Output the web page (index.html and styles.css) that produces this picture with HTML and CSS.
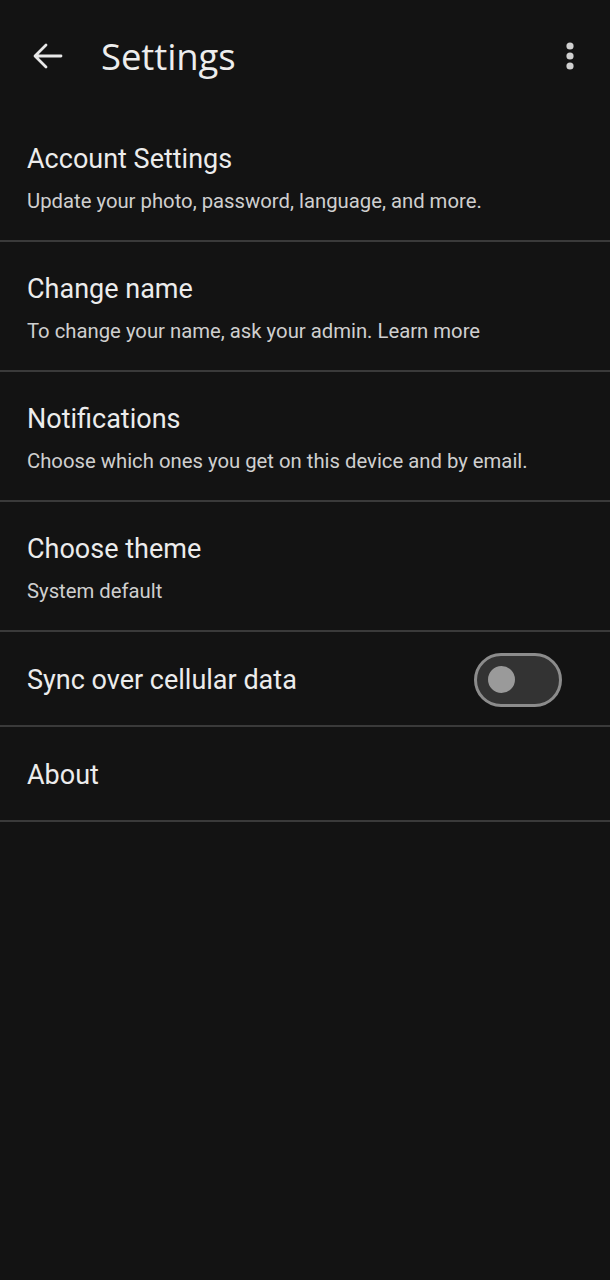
FILE: index.html
```html
<!DOCTYPE html>
<html>
<head>
<meta charset="utf-8">
<link rel="stylesheet" href="styles.css">
</head>
<body>
<div class="screen">
  <header class="appbar">
    <svg class="back" width="30" height="26" viewBox="0 0 30 26"><path d="M28 13H3M13 2L2 13l11 11" fill="none" stroke="#e8e8e8" stroke-width="2.8" stroke-linecap="round" stroke-linejoin="round"/></svg>
    <h1 class="title">Settings</h1>
    <svg class="more" width="10" height="30" viewBox="0 0 10 30"><circle cx="5" cy="5" r="3.6" fill="#d0d0d0"/><circle cx="5" cy="15" r="3.6" fill="#d0d0d0"/><circle cx="5" cy="25" r="3.6" fill="#d0d0d0"/></svg>
  </header>
  <ul class="list">
    <li class="row two">
      <div class="label">Account Settings</div>
      <div class="sub">Update your photo, password, language, and more.</div>
    </li>
    <li class="row two">
      <div class="label">Change name</div>
      <div class="sub">To change your name, ask your admin. Learn more</div>
    </li>
    <li class="row two">
      <div class="label">Notifications</div>
      <div class="sub">Choose which ones you get on this device and by email.</div>
    </li>
    <li class="row two">
      <div class="label">Choose theme</div>
      <div class="sub">System default</div>
    </li>
    <li class="row one switchrow">
      <div class="label">Sync over cellular data</div>
      <div class="switch"><div class="knob"></div></div>
    </li>
    <li class="row one">
      <div class="label">About</div>
    </li>
  </ul>
</div>
</body>
</html>
```
FILE: styles.css
```css
* { box-sizing: border-box; }
html, body { margin: 0; padding: 0; background: #131313; }
body { font-family: Roboto, "Noto Sans", sans-serif; color: #ececec; }
.screen { width: 610px; min-height: 1280px; background: #131313; }
.appbar {
  height: 112px;
  display: flex;
  align-items: center;
  padding: 0 35px 0 33px;
}
.back { display: block; margin-right: 38px; }
.title {
  margin: 0;
  flex: 1;
  font-family: "Open Sans", Roboto, sans-serif;
  font-weight: 400;
  font-size: 36.5px;
  letter-spacing: -0.1px;
  color: #ededed;
}
.more { display: block; }
.list { list-style: none; margin: 0; padding: 0; }
.row {
  border-bottom: 2px solid #3a3a3a;
  padding: 0 27px;
}
.row.two { height: 130px; padding-top: 30px; }
.row.one { height: 95px; display: flex; align-items: center; justify-content: space-between; padding-top: 2px; }
.label { font-size: 27px; line-height: 34px; color: #ececec; }
.sub { font-size: 20.3px; line-height: 26px; margin-top: 12px; color: #cfcfcf; }
.switchrow { padding-right: 48px; }
.switch {
  width: 88px; height: 54px;
  border: 3px solid #8c8c8c;
  border-radius: 27px;
  background: #333333;
  display: flex; align-items: center;
  padding-left: 11px;
}
.knob { width: 27px; height: 27px; border-radius: 50%; background: #9a9a9a; }
```
